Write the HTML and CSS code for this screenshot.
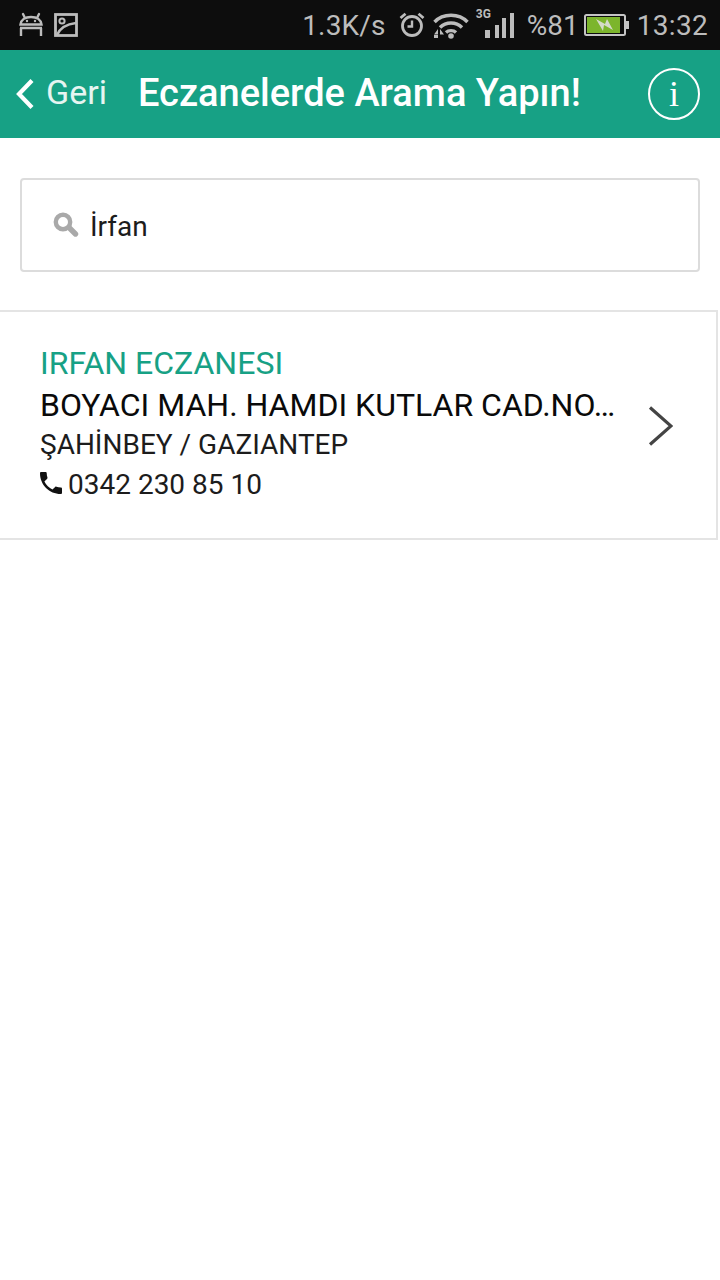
FILE: index.html
```html
<!DOCTYPE html>
<html lang="tr">
<head>
<meta charset="utf-8">
<title>Eczanelerde Arama Yapın!</title>
<link rel="stylesheet" href="styles.css">
</head>
<body>
<div class="status">
  <svg class="st-android" width="26" height="26" viewBox="0 0 26 26" fill="none" stroke="#bcbcbc" stroke-width="2.400">
    <path d="M2.500 13.500C3 9 7 6 13 6s10 3 10.500 7.500z"/>
    <path d="M7 7L5 3M19 7l2-4" stroke-linecap="round"/>
    <path d="M2 17h22M3 17v8M23 17v8"/>
    <circle cx="9" cy="10" r="1.200" fill="#bcbcbc" stroke="none"/><circle cx="17" cy="10" r="1.200" fill="#bcbcbc" stroke="none"/>
  </svg>
  <svg class="st-image" width="24" height="24" viewBox="0 0 24 24" fill="none" stroke="#bcbcbc" stroke-width="2.800">
    <rect x="1.500" y="1.500" width="21" height="21"/>
    <circle cx="8" cy="8" r="2.600" stroke-width="2"/>
    <path d="M3 22C6 15 13 11 22 10" stroke-width="2.400"/>
  </svg>
  <span class="st-speed">1.3K/s</span>
  <svg class="st-alarm" width="26" height="26" viewBox="0 0 26 26" fill="none" stroke="#bcbcbc" stroke-width="2.800">
    <circle cx="13" cy="14" r="9.500"/>
    <path d="M13 8.500V14.500H8.500" stroke-width="2.400"/>
    <path d="M1.500 6L6.500 1.800M24.500 6L19.500 1.800"/>
  </svg>
  <svg class="st-wifi" width="36" height="28" viewBox="0 0 36 28" fill="none" stroke="#bcbcbc" stroke-width="3.400">
    <path d="M1.500 11C10 2 26 2 34.500 11"/>
    <path d="M7 16.500C13 10.500 23 10.500 29 16.500"/>
    <path d="M13 21.500C15.500 19 20.500 19 23 21.500"/>
    <circle cx="18" cy="25" r="2.800" fill="#bcbcbc" stroke="none"/>
    <path d="M5 18L1 23.500h4zM7 18l4 5.500H7zM1 24h4v3H1z" fill="#bcbcbc" stroke="none"/>
  </svg>
  <div class="st-signal">
    <span class="st-3g">3G</span>
    <svg width="30" height="25" viewBox="0 0 30 25" fill="#bcbcbc">
      <rect x="1" y="17" width="5" height="8"/>
      <rect x="11" y="12" width="4" height="13"/>
      <rect x="18" y="5" width="4" height="20"/>
      <rect x="26" y="0" width="4" height="25"/>
    </svg>
  </div>
  <span class="st-pct">%81</span>
  <svg class="st-batt" width="45" height="22" viewBox="0 0 45 22">
    <rect x="1" y="1" width="40" height="20" rx="1.500" fill="none" stroke="#c4c4c4" stroke-width="2"/>
    <rect x="3" y="3" width="33" height="16" fill="#7cb52c"/>
    <rect x="42" y="7" width="3" height="8" fill="#c4c4c4"/>
    <path d="M12 5l9 5 2-5 6 11-9-5-1 6z" fill="#d4dbc8"/>
  </svg>
  <span class="st-time">13:32</span>
</div>

<header class="bar">
  <div class="back">
    <svg width="20" height="32" viewBox="0 0 20 32" fill="none" stroke="#fff" stroke-width="4.200">
      <path d="M17 2.500L4 16l13 13.500"/>
    </svg>
    <span class="back-label">Geri</span>
  </div>
  <h1 class="title">Eczanelerde Arama Yapın!</h1>
  <div class="info"><span class="info-i">i</span></div>
</header>

<div class="search-wrap">
  <div class="search">
    <svg width="26" height="26" viewBox="0 0 26 26" fill="none" stroke="#a9a9a9">
      <circle cx="10" cy="10" r="7.200" stroke-width="4.400"/>
      <path d="M16 15.500l6.500 6.500" stroke-width="5.400" stroke-linecap="round"/>
    </svg>
    <span class="search-text">İrfan</span>
  </div>
</div>

<div class="item">
  <div class="item-body">
    <div class="name">IRFAN ECZANESI</div>
    <div class="addr">BOYACI MAH. HAMDI KUTLAR CAD.NO…</div>
    <div class="city">ŞAHİNBEY / GAZIANTEP</div>
    <div class="phone">
      <svg width="22" height="22" viewBox="3 3 18 18" fill="#111"><path d="M6.600 10.800c1.400 2.800 3.800 5.100 6.600 6.600l2.200-2.200c.3-.3.700-.4 1-.2 1.100.4 2.300.6 3.600.6.600 0 1 .4 1 1V20c0 .6-.4 1-1 1C10.600 21 3 13.400 3 4c0-.6.400-1 1-1h3.500c.6 0 1 .4 1 1 0 1.300.2 2.500.6 3.600.1.300 0 .7-.2 1z"/></svg>
      <span>0342 230 85 10</span>
    </div>
  </div>
  <svg class="chev" width="26" height="40" viewBox="0 0 26 40" fill="none" stroke="#444" stroke-width="3.200">
    <path d="M3 1.500L24 20 3 38.500"/>
  </svg>
</div>
</body>
</html>
```

FILE: styles.css
```css
* { box-sizing: border-box; }
html, body { margin: 0; padding: 0; background: #fff; }
body { width: 720px; height: 1280px; overflow: hidden; font-family: Roboto, "Noto Sans", sans-serif; }

.status { height: 50px; background: #0d0d0d; display: flex; align-items: center; padding: 0 12px 0 18px; color: #bcbcbc; font-size: 28px; }
.st-android { margin-bottom: 2px; }
.st-image { margin-left: 10px; }
.st-speed { margin-left: auto; letter-spacing: .2px; }
.st-alarm { margin-left: 13px; margin-bottom: 1px; }
.st-wifi { margin-left: 8px; margin-bottom: 1px; }
.st-signal { position: relative; margin-left: 5px; width: 40px; height: 40px; padding-top: 8px; display: flex; align-items: flex-start; justify-content: flex-end; }
.st-3g { position: absolute; left: 2px; top: 2px; font-size: 12px; font-weight: 700; line-height: 14px; }
.st-pct { margin-left: 13px; }
.st-batt { margin-left: 5px; }
.st-time { margin-left: 8px; letter-spacing: .3px; }

.bar { height: 88px; background: #17a185; display: flex; align-items: center; color: #fff; padding-left: 15px; }
.back { display: flex; align-items: center; width: 123px; }
.back-label { margin-left: 11px; margin-bottom: 4px; font-size: 34px; color: #e6f5f1; }
.title { margin: 0 0 2px; font-size: 38px; font-weight: 500; line-height: 44px; white-space: nowrap; }
.info { margin-left: auto; margin-right: 20px; width: 52px; height: 52px; border: 2px solid #fff; border-radius: 50%; display: flex; align-items: center; justify-content: center; }
.info-i { font-family: "Liberation Serif", serif; font-size: 36px; line-height: 1; }

.search-wrap { padding: 40px 20px 38px; }
.search { height: 94px; border: 2px solid #dcdcdc; border-radius: 4px; display: flex; align-items: center; padding-left: 31px; }
.search-text { margin-left: 11px; margin-top: 3px; font-size: 28px; color: #1c1c1c; }

.item { width: 718px; height: 230px; border: 2px solid #e4e4e4; border-left: 0; display: flex; align-items: center; padding: 0 43px 0 40px; }
.item-body { width: 590px; margin-bottom: 2px; }
.name { font-size: 32px; line-height: 38px; margin-bottom: 1px; color: #17a185; }
.addr { font-size: 32px; line-height: 44px; margin-bottom: 1px; color: #0a0a0a; white-space: nowrap; }
.city { font-size: 28px; line-height: 34px; color: #1c1c1c; }
.phone { display: flex; align-items: center; margin-top: 3px; font-size: 28px; line-height: 40px; color: #1c1c1c; }
.phone svg { margin-right: 6px; margin-top: -3px; }
.chev { margin-left: auto; margin-top: 2px; }
```
